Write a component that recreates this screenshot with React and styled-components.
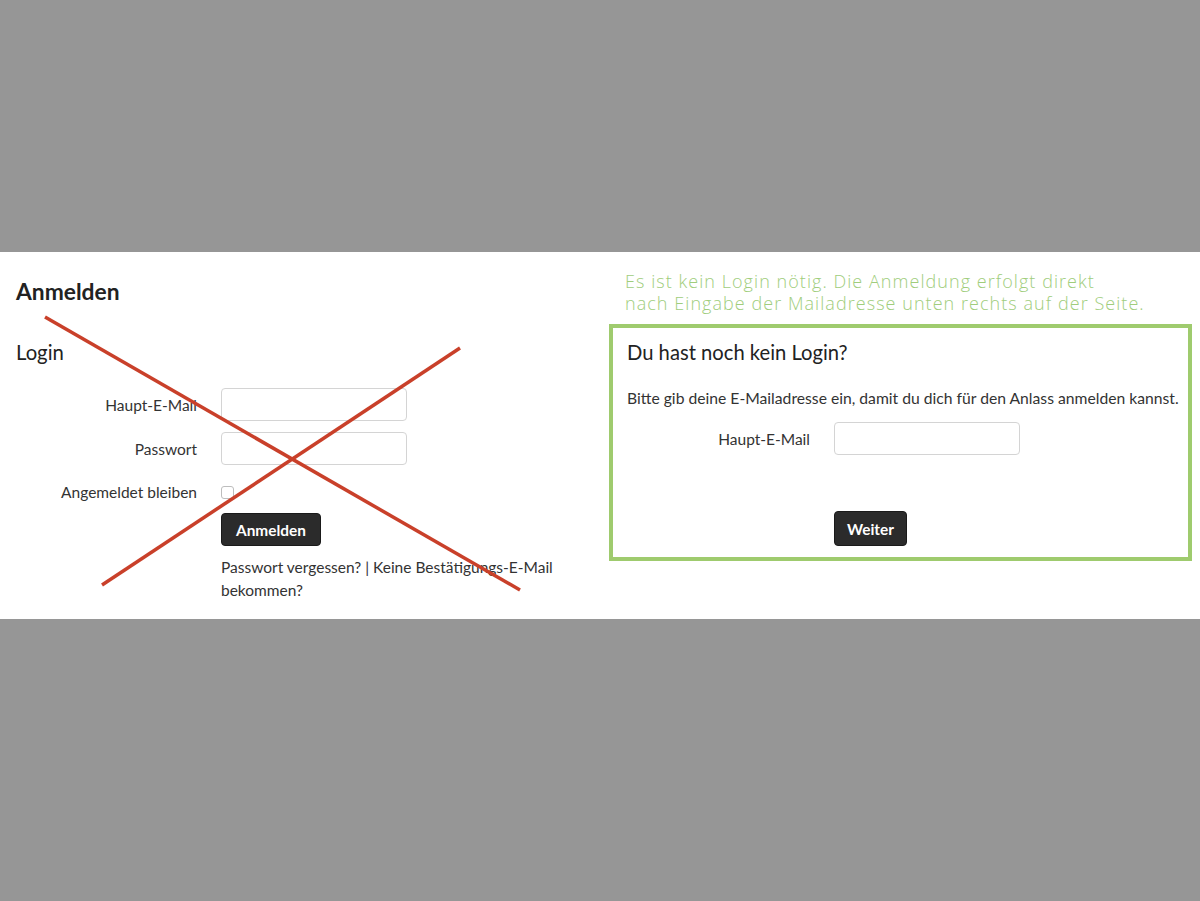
import React from "react";
import styled, { createGlobalStyle } from "styled-components";

const GlobalStyle = createGlobalStyle`
  html, body {
    margin: 0;
    padding: 0;
    background: #969696;
  }
  body {
    font-family: "Lato", "Liberation Sans", sans-serif;
    color: #333;
  }
  * { box-sizing: border-box; }
`;

const Page = styled.div`
  width: 1200px;
  height: 901px;
  display: flex;
  flex-direction: column;
  background: #969696;
`;

const Spacer = styled.div`
  height: ${(p) => p.$h}px;
  flex: none;
`;

const Band = styled.section`
  position: relative;
  height: 367px;
  flex: none;
  background: #fff;
  display: grid;
  grid-template-columns: 609px 583px;
`;

const LeftCol = styled.div`
  padding: 26px 0 0 16px;
`;

const Title = styled.h1`
  margin: 0;
  font-size: 22.8px;
  line-height: 26px;
  font-weight: 700;
  color: #222;
`;

const SubTitle = styled.h2`
  margin: ${(p) => p.$mt || 0}px 0 0;
  font-size: ${(p) => p.$fs || 20}px;
  line-height: 24px;
  font-weight: 400;
  color: #222;
`;

const Row = styled.div`
  display: flex;
  align-items: center;
  margin-top: ${(p) => p.$mt || 0}px;
  min-height: ${(p) => p.$h || 0}px;
`;

const Label = styled.label`
  width: ${(p) => p.$w}px;
  margin-right: 24px;
  text-align: right;
  font-size: 15.5px;
  line-height: 20px;
  color: #333;
  flex: none;
`;

const Input = styled.input`
  width: 186px;
  height: 33px;
  border: 1px solid #d4d4d4;
  border-radius: 4px;
  background: #fff;
  padding: 4px 8px;
  margin: 0;
  outline: none;
`;

const Check = styled.span`
  display: inline-block;
  width: 13px;
  height: 13px;
  border: 1px solid #bdbdbd;
  border-radius: 3px;
  background: #fff;
`;

const Button = styled.button`
  height: ${(p) => p.$h}px;
  padding: 0 ${(p) => p.$px}px;
  background: #2b2b2b;
  color: #fff;
  border: 1px solid #1a1a1a;
  border-radius: 4px;
  font-family: "Lato", "Liberation Sans", sans-serif;
  font-size: 15.4px;
  font-weight: 700;
  margin: 0;
  cursor: pointer;
`;

const Links = styled.p`
  margin: 10px 0 0 205px;
  font-size: 15.5px;
  line-height: 23px;
  color: #333;
`;

const RightCol = styled.div`
  padding-top: 18px;
`;

const Note = styled.p`
  margin: 0 0 10px 16px;
  font-family: "Open Sans", sans-serif;
  font-weight: 300;
  font-size: 18px;
  letter-spacing: 1.05px;
  line-height: 22px;
  color: #a0cd7c;
  white-space: nowrap;
`;

const Box = styled.div`
  border: 4px solid #9fcb6e;
  height: 237px;
  padding: 12px 0 0 14px;
`;

const Para = styled.p`
  margin: 24px 0 0;
  font-size: 15.7px;
  line-height: 20px;
  color: #333;
  white-space: nowrap;
`;

const ButtonRow = styled.div`
  margin: 56px 0 0 207px;
`;

const CrossOverlay = styled.svg`
  position: absolute;
  left: 0;
  top: 0;
  width: 600px;
  height: 367px;
  pointer-events: none;
`;

export default function App() {
  return (
    <>
      <GlobalStyle />
      <Page>
        <Spacer $h={252} />
        <Band>
          <LeftCol>
            <Title>Anmelden</Title>
            <SubTitle $mt={36} $fs={20.3}>Login</SubTitle>
            <Row $mt={24}>
              <Label $w={181}>Haupt-E-Mail</Label>
              <Input type="text" />
            </Row>
            <Row $mt={11}>
              <Label $w={181}>Passwort</Label>
              <Input type="password" />
            </Row>
            <Row $mt={17} $h={20}>
              <Label $w={181}>Angemeldet bleiben</Label>
              <Check />
            </Row>
            <Row $mt={11}>
              <Label $w={181} />
              <Button $h={33} $px={14}>Anmelden</Button>
            </Row>
            <Links>
              Passwort vergessen? | Keine Bestätigungs-E-Mail
              <br />
              bekommen?
            </Links>
          </LeftCol>
          <RightCol>
            <Note>
              Es ist kein Login nötig. Die Anmeldung erfolgt direkt
              <br />
              nach Eingabe der Mailadresse unten rechts auf der Seite.
            </Note>
            <Box>
              <SubTitle $fs={20.2}>Du hast noch kein Login?</SubTitle>
              <Para>
                Bitte gib deine E-Mailadresse ein, damit du dich für den Anlass anmelden kannst.
              </Para>
              <Row $mt={14}>
                <Label $w={183}>Haupt-E-Mail</Label>
                <Input type="email" />
              </Row>
              <ButtonRow>
                <Button $h={35} $px={12}>Weiter</Button>
              </ButtonRow>
            </Box>
          </RightCol>
          <CrossOverlay viewBox="0 0 600 367">
            <line x1="45" y1="65" x2="520" y2="338" stroke="#c9402a" strokeWidth="3.5" />
            <line x1="102" y1="333" x2="460" y2="96" stroke="#c9402a" strokeWidth="3.5" />
          </CrossOverlay>
        </Band>
      </Page>
    </>
  );
}
